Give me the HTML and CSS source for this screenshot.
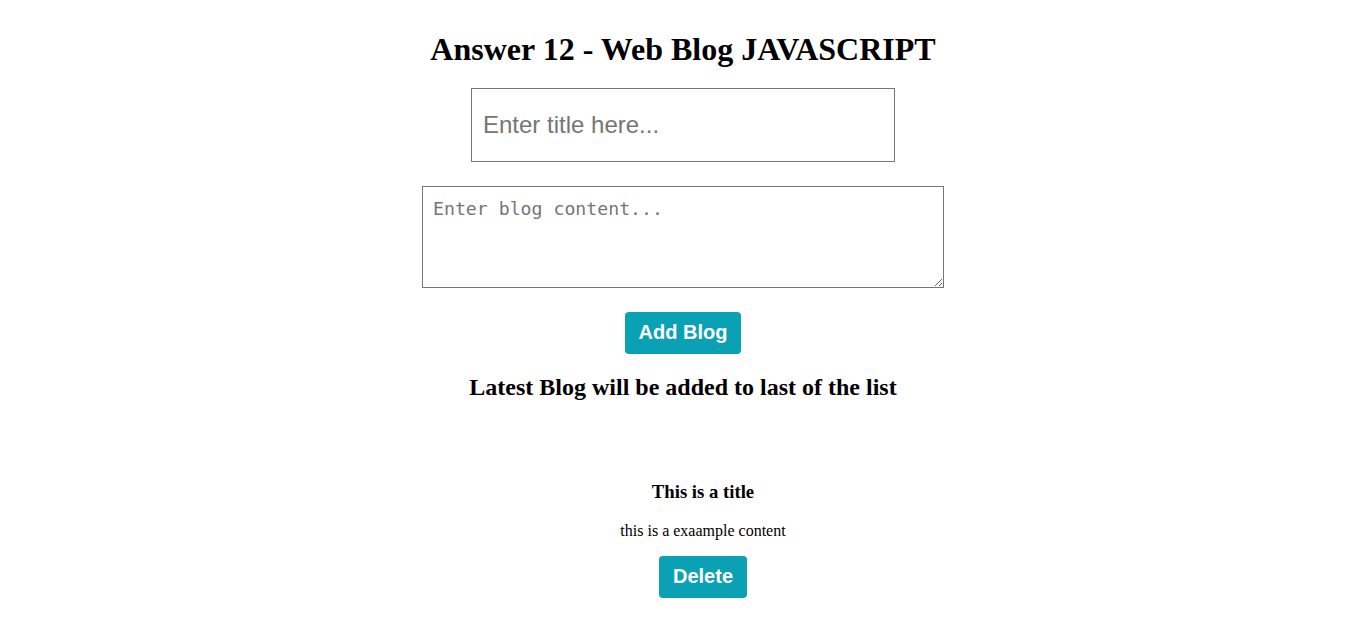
FILE: index.html
```html
<!DOCTYPE html>
<html>
<head>
<meta charset="utf-8">
<link rel="stylesheet" href="styles.css">
</head>
<body>
<div class="page">
  <h1 class="title">Answer 12 - Web Blog JAVASCRIPT</h1>
  <input class="title-input" type="text" placeholder="Enter title here...">
  <textarea class="content-input" placeholder="Enter blog content..."></textarea>
  <button class="btn btn-add">Add Blog</button>
  <h2 class="note">Latest Blog will be added to last of the list</h2>
</div>
<ul class="blog-list">
  <li class="blog">
    <h3 class="blog-title">This is a title</h3>
    <p class="blog-content">this is a exaample content</p>
    <button class="btn btn-delete">Delete</button>
  </li>
</ul>
</body>
</html>
```
FILE: styles.css
```css
html, body {
  margin: 0;
  padding: 0;
  background: #fff;
}
body {
  font-family: "Liberation Serif", "Times New Roman", serif;
  color: #000;
}
.page {
  display: flex;
  flex-direction: column;
  align-items: center;
  padding-top: 9px;
}
.title {
  font-size: 32px;
  font-weight: bold;
  margin: 22px 0 0 0;
  line-height: 37px;
}
.title-input {
  margin-top: 20px;
  width: 424px;
  height: 74px;
  box-sizing: border-box;
  border: 1px solid #767676;
  padding: 0 11px;
  font-family: "Liberation Sans", Arial, sans-serif;
  font-size: 24px;
  outline: none;
}
.title-input::placeholder {
  color: #757575;
}
.content-input {
  margin-top: 24px;
  width: 522px;
  height: 102px;
  box-sizing: border-box;
  border: 1px solid #767676;
  padding: 11px 10px 10px 10px;
  font-family: "DejaVu Sans Mono", "Liberation Mono", monospace;
  font-size: 18.2px;
  resize: both;
}
.content-input::placeholder {
  color: #757575;
}
.btn {
  background: #0ba1b5;
  color: #fff;
  border: none;
  border-radius: 4px;
  font-family: "Liberation Sans", Arial, sans-serif;
  font-weight: bold;
  font-size: 20px;
  height: 42px;
  padding: 0 0 2px 0;
  white-space: nowrap;
  cursor: pointer;
}
.btn-add {
  margin-top: 24px;
  width: 116px;
}
.note {
  font-size: 24px;
  font-weight: bold;
  margin: 19px 0 0 0;
  line-height: 28px;
}
.blog-list {
  list-style: none;
  margin: 80px 0 0 0;
  padding: 0 0 0 40px;
}
.blog {
  display: flex;
  flex-direction: column;
  align-items: center;
}
.blog-title {
  font-size: 18.72px;
  font-weight: bold;
  margin: 0;
  line-height: 22px;
}
.blog-content {
  font-size: 16px;
  margin: 18px 0 0 0;
  line-height: 19px;
}
.btn-delete {
  margin-top: 16px;
  width: 88px;
}
```
